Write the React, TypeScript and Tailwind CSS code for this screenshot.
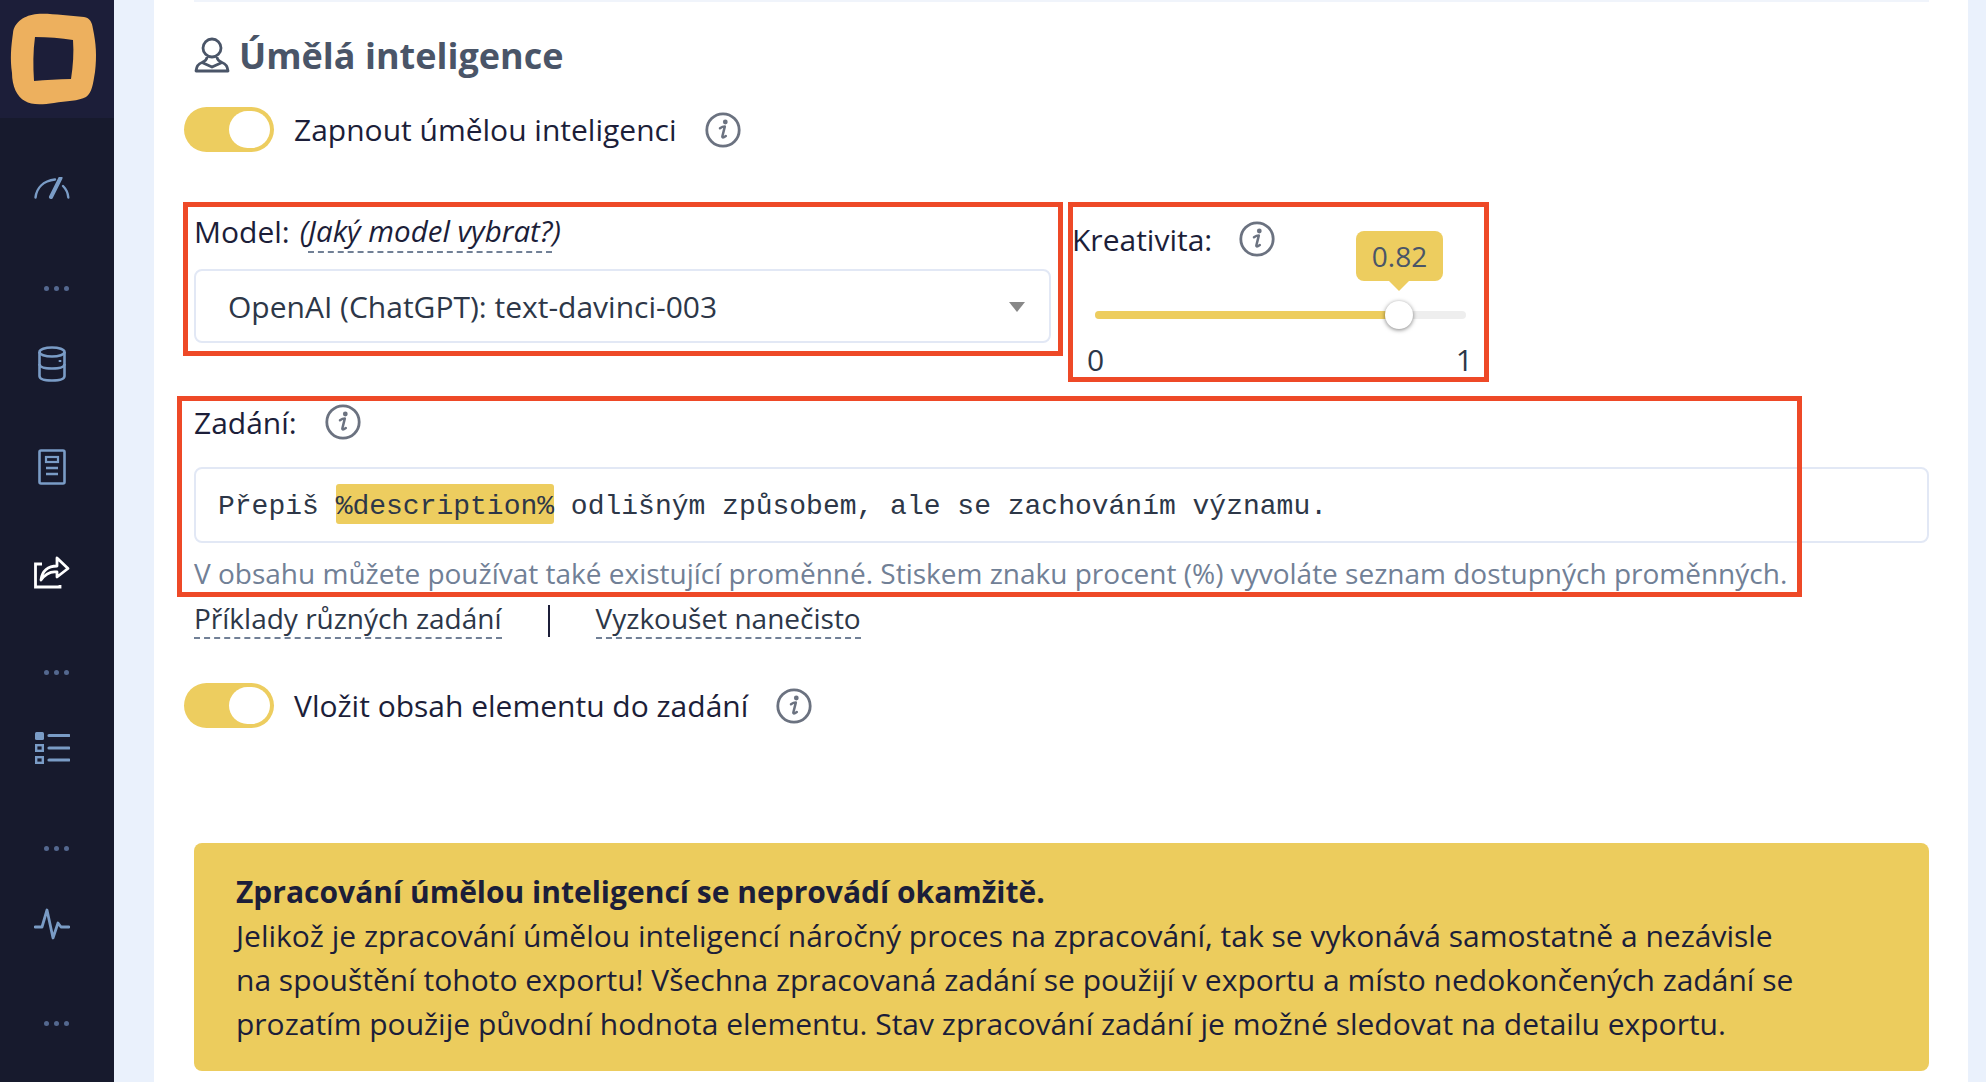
import React from "react";

const font = { fontFamily: '"Open Sans", sans-serif' };

function Info({ className = "" }: { className?: string }) {
  return (
    <svg width="36" height="36" viewBox="0 0 36 36" fill="none" className={className}>
      <circle cx="18" cy="18" r="16.2" stroke="#6b7280" strokeWidth="2.8" />
      <circle cx="20.300" cy="10" r="2.400" fill="#6b7280" />
      <path d="M15 16.200c1.500-1 3-1.600 4.800-1.600l-2.400 9.600c-.3 1.500.6 1.900 3.400-.2" stroke="#6b7280" strokeWidth="2.500" strokeLinecap="round" strokeLinejoin="round" />
    </svg>
  );
}

function Toggle() {
  return (
    <div className="w-[90px] h-[45px] rounded-full bg-[#edcd5f] relative shrink-0">
      <div className="absolute left-[45px] top-[4px] w-[41px] h-[37px] rounded-full bg-white" />
    </div>
  );
}

function Dashed({ children, className = "" }: { children: React.ReactNode; className?: string }) {
  return <span className={"border-b-2 border-dashed border-[#718096] " + className}>{children}</span>;
}

function Dots() {
  return (
    <div className="flex gap-[5px] pl-[44px]">
      <span className="w-[5px] h-[5px] rounded-full bg-[#54688f]" />
      <span className="w-[5px] h-[5px] rounded-full bg-[#54688f]" />
      <span className="w-[5px] h-[5px] rounded-full bg-[#54688f]" />
    </div>
  );
}

function NavItem({ children, className }: { children: React.ReactNode; className: string }) {
  return <div className={"h-[40px] flex items-center " + className}>{children}</div>;
}

function Sidebar() {
  const c = "#7a9cc6";
  return (
    <aside className="w-[114px] h-full bg-[#171a2d] shrink-0">
      <div className="h-[118px] bg-[#1c1e39] flex items-center pl-[10px]">
        <svg width="88" height="92" viewBox="0 0 88 92">
          <path fillRule="evenodd" fill="#edb05e" d="M27 1C40 0 58 3 74 4c6 1 8 5 9 12 3 14 4 27 2 43-2 12-3 21-9 25-7 4-20 4-32 6-13 2-23 2-29-2C7 84 2 73 2 60 0 46 1 34 3 20 4 9 15 2 27 1ZM25 24c13 0 26 1 38 3 1 13 0 26-2 39-13 0-25 1-37 2-1-15-1-30 1-44Z" />
        </svg>
      </div>
      <NavItem className="mt-[50px] pl-[34px]">
        <svg width="36" height="22" viewBox="0 0 36 22" fill="none" stroke={c} strokeWidth="2.400" strokeLinecap="round">
          <path d="M1.500 20.500C2.500 11 9 4 21 2.500" />
          <path d="M29 9c3 3 5 7 5.300 11.500" />
          <path d="M17 20 26.500 1" strokeWidth="4" />
        </svg>
      </NavItem>
      <NavItem className="mt-[60px]"><Dots /></NavItem>
      <NavItem className="mt-[36px] pl-[38px]">
        <svg width="28" height="36" viewBox="0 0 28 36" fill="none" stroke={c} strokeWidth="2.600">
          <ellipse cx="14" cy="6" rx="12.500" ry="4.500" />
          <path d="M1.500 6v24c0 3 5.500 4.500 12.500 4.500S26.500 33 26.500 30V6" />
          <path d="M1.500 18c0 3 5.500 4.500 12.500 4.500S26.500 21 26.500 18" />
          <path d="M22 14v2" />
        </svg>
      </NavItem>
      <NavItem className="mt-[63px] pl-[38px]">
        <svg width="28" height="36" viewBox="0 0 28 36" fill="none" stroke={c} strokeWidth="2.600">
          <rect x="1.500" y="1.500" width="25" height="33" rx="1.500" />
          <rect x="8" y="8" width="12" height="5" strokeWidth="2.200" />
          <path d="M8 19h12M8 25h12" strokeWidth="2.400" />
        </svg>
      </NavItem>
      <NavItem className="mt-[65px] pl-[34px]">
        <svg width="36" height="33" viewBox="0 0 36 33" fill="none" stroke="#ffffff" strokeWidth="2.800">
          <path d="M8 8H1.500v23H26v-2" />
          <path d="M7 24C8 15 14 10 23 10V2l11 10.500L23 21v-5c-6-1-11 1-16 8Z" strokeLinejoin="round" />
        </svg>
      </NavItem>
      <NavItem className="mt-[60px]"><Dots /></NavItem>
      <NavItem className="mt-[36px] pl-[35px]">
        <svg width="35" height="32" viewBox="0 0 35 32" fill={c}>
          <rect x="0" y="0" width="9" height="8" rx="1.500" />
          <rect x="1.200" y="13.200" width="6.600" height="5.600" fill="none" stroke={c} strokeWidth="2.400" />
          <rect x="1.200" y="25.200" width="6.600" height="5.600" fill="none" stroke={c} strokeWidth="2.400" />
          <path d="M14 3.500h20M14 16h20M14 28h20" stroke={c} strokeWidth="3.200" strokeLinecap="round" />
        </svg>
      </NavItem>
      <NavItem className="mt-[60px]"><Dots /></NavItem>
      <NavItem className="mt-[36px] pl-[34px]">
        <svg width="36" height="32" viewBox="0 0 36 32" fill="none" stroke={c} strokeWidth="2.800" strokeLinecap="round" strokeLinejoin="round">
          <path d="M1 19h7l5-17 6 28 5-15 3 4h8" />
        </svg>
      </NavItem>
      <NavItem className="mt-[59px]"><Dots /></NavItem>
    </aside>
  );
}

export default function App() {
  return (
    <div style={font} className="flex w-[1986px] h-[1082px] overflow-hidden bg-[#eaf1fc] text-[30px] text-[#1c1e39]">
      <Sidebar />
      <main className="relative ml-[40px] w-[1814px] h-full bg-white pl-[40px] pr-[39px]">
        <div className="h-[2px] bg-[#f0f4fb]" />
        <div className="h-[105px] flex items-center gap-[9px] text-[#4a5568]">
          <svg width="36" height="36" viewBox="0 0 36 36" fill="none" stroke="#4a5568" strokeWidth="2.800">
            <circle cx="18" cy="11" r="9" />
            <path d="M13 20c0 3-2 4-5 5.500-3 1-5.500 3-6 8.500h32c-.5-5.500-3-7.500-6-8.500-3-1.500-5-2.500-5-5.500M8 25.500 18 30l10-4.500" strokeLinejoin="round" />
          </svg>
          <h2 className="text-[36px] font-bold leading-none pt-[2px]">Úmělá inteligence</h2>
        </div>
        <div className="h-[45px] flex items-center -ml-[10px]">
          <Toggle />
          <span className="ml-[20px]">Zapnout úmělou inteligenci</span>
          <Info className="ml-[28px]" />
        </div>

        <div className="flex mt-[61px] gap-[21px]">
          <div className="w-[857px] shrink-0">
            <div className="h-[36px] flex items-center">
              <span>Model:</span>
              <em className="ml-[10px] text-[29.500px]">(<Dashed>Jaký model vybrat?</Dashed>)</em>
            </div>
            <div className="mt-[20px] h-[74px] border-2 border-[#e2e8f5] rounded-[8px] pl-[32px] pr-[24px] flex items-center justify-between text-[#2d3748]">
              <span>OpenAI (ChatGPT): text-davinci-003</span>
              <span className="w-0 h-0 border-x-[8px] border-x-transparent border-t-[10px] border-t-[#888888] mt-[2px]" />
            </div>
          </div>
          <div className="w-[401px] shrink-0">
            <div className="h-[52px] flex items-center">
              <span>Kreativita:</span>
              <Info className="ml-[27px]" />
            </div>
            <div className="relative mt-[46px] ml-[23px] w-[371px] h-[8px] rounded-full bg-[#eeeeee]">
              <div className="h-full w-[304px] rounded-full bg-[#edcd5f]" />
              <div className="absolute left-[290px] top-[-10px] w-[28px] h-[28px] rounded-full bg-white shadow-[0_1px_4px_rgba(0,0,0,0.5)]" />
              <div className="absolute left-[261px] top-[-80px] w-[87px] h-[50px] rounded-[8px] bg-[#edcd5f] flex items-center justify-center text-[#4a5568] text-[28px]">
                0.82
                <span className="absolute top-[50px] left-[33px] w-0 h-0 border-x-[10px] border-x-transparent border-t-[10px] border-t-[#edcd5f]" />
              </div>
            </div>
            <div className="mt-[20px] h-[41px] flex items-center justify-between pl-[15px] text-[#2d3748]">
              <span>0</span>
              <span>1</span>
            </div>
          </div>
        </div>

        <div className="mt-[22px] h-[40px] flex items-center">
          <span>Zadání:</span>
          <Info className="ml-[28px]" />
        </div>
        <div style={{ fontFamily: '"Liberation Mono", monospace' }} className="mt-[25px] h-[76px] border-2 border-[#e2e8f5] rounded-[8px] pl-[22px] pt-[4px] flex items-center text-[28px] text-[#2d3748] whitespace-pre">
          Přepiš <span className="relative -top-[3px] bg-[#edcd5f] rounded-[3px] h-[40px] leading-[46px]">%description%</span> odlišným způsobem, ale se zachováním významu.
        </div>
        <div className="mt-[8px] h-[44px] leading-[44px] text-[28px] text-[#718096] whitespace-nowrap">
          V obsahu můžete používat také existující proměnné. Stiskem znaku procent (%) vyvoláte seznam dostupných proměnných.
        </div>
        <div className="mt-[4px] h-[40px] flex items-start text-[28px] leading-[38px] text-[#2d3748]">
          <Dashed>Příklady různých zadání</Dashed>
          <span className="ml-[46px] mt-[6px] w-[2px] h-[32px] bg-[#1c1e39]" />
          <Dashed className="ml-[46px]">Vyzkoušet nanečisto</Dashed>
        </div>
        <div className="mt-[44px] h-[45px] flex items-center -ml-[10px]">
          <Toggle />
          <span className="ml-[20px]">Vložit obsah elementu do zadání</span>
          <Info className="ml-[28px]" />
        </div>
        <div className="mt-[115px] h-[228px] rounded-[8px] bg-[#eccc5d] px-[42px] pt-[27px] leading-[44.100px]">
          <div className="font-bold">Zpracování úmělou inteligencí se neprovádí okamžitě.</div>
          <div>Jelikož je zpracování úmělou inteligencí náročný proces na zpracování, tak se vykonává samostatně a nezávisle</div>
          <div>na spouštění tohoto exportu! Všechna zpracovaná zadání se použijí v exportu a místo nedokončených zadání se</div>
          <div>prozatím použije původní hodnota elementu. Stav zpracování zadání je možné sledovat na detailu exportu.</div>
        </div>

        <div className="absolute left-[29px] top-[202px] w-[880px] h-[154px] border-[5px] border-[#ee4927]" />
        <div className="absolute left-[914px] top-[202px] w-[421px] h-[180px] border-[5px] border-[#ee4927]" />
        <div className="absolute left-[23px] top-[396px] w-[1625px] h-[201px] border-[5px] border-[#ee4927]" />
      </main>
    </div>
  );
}
